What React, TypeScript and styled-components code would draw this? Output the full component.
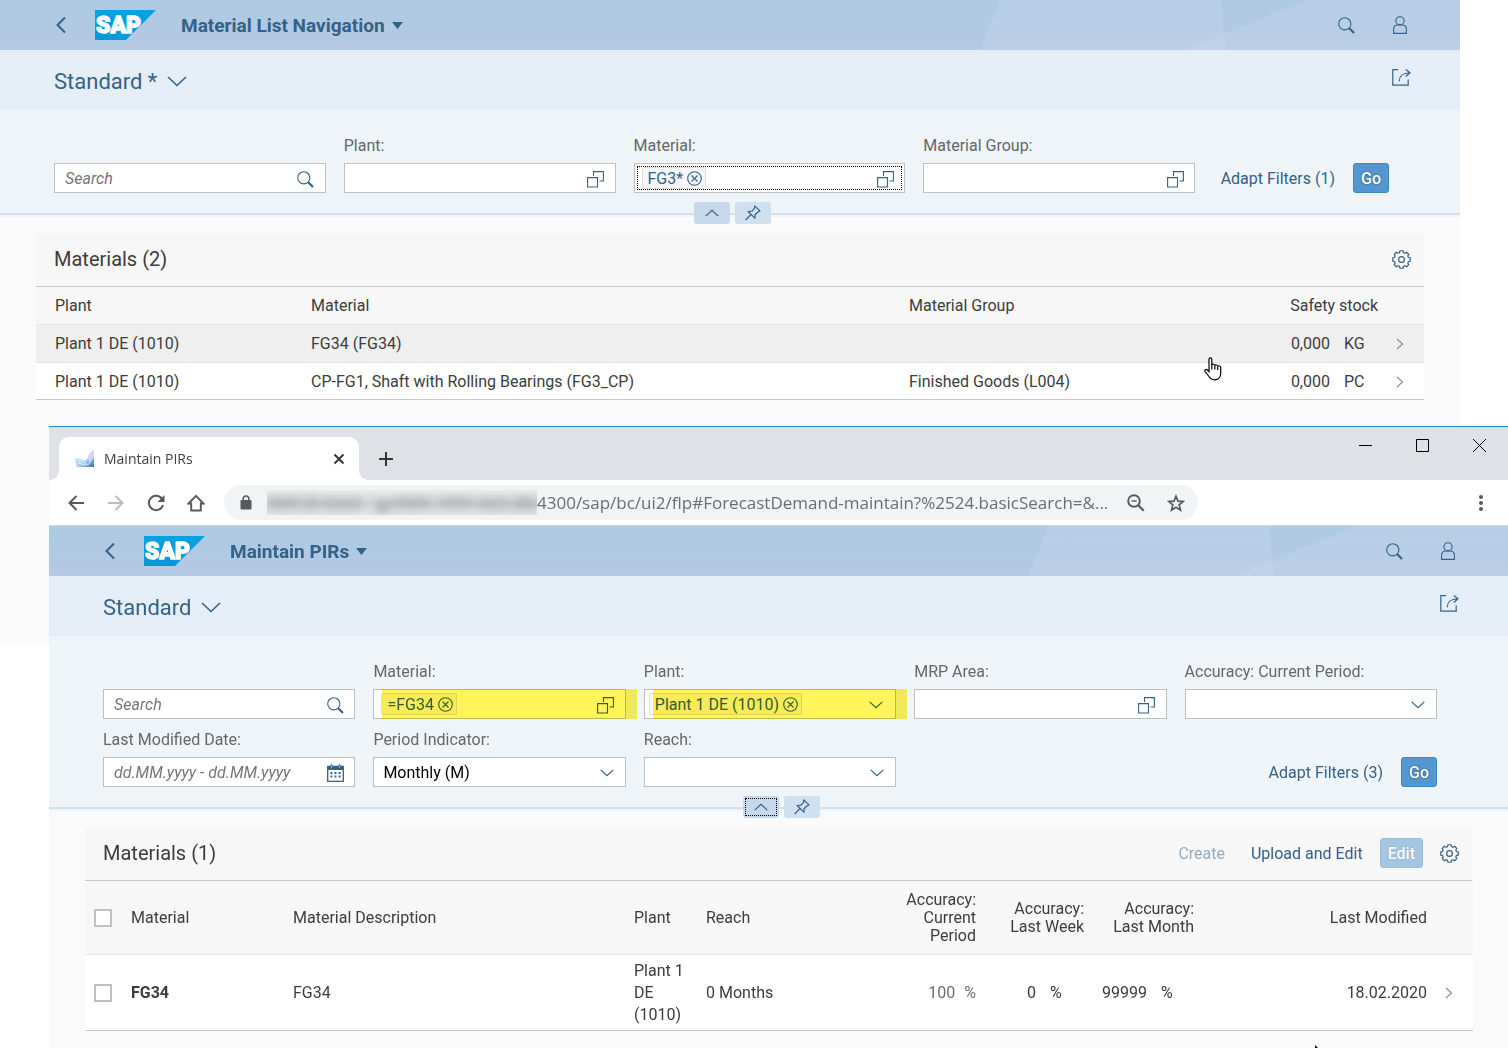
import React from "react";
import styled, { createGlobalStyle, css } from "styled-components";

const BLUE = "#346187";
const UI = `Roboto, "Noto Sans", sans-serif`;
const CHROME = `"Open Sans", "Noto Sans", sans-serif`;

const GlobalStyle = createGlobalStyle`
  *, *::before, *::after { box-sizing: border-box; }
  body { margin: 0; background: #fff; font-family: ${UI}; font-size: 16px; color: #3c3c3c; }
  button, input, select { font: inherit; color: inherit; margin: 0; }
  button { padding: 0; border: 0; background: none; cursor: pointer; }
  svg { display: block; flex: none; }
`;

/* ---------- windows ---------- */

const Desktop = styled.main`
  position: relative;
  display: grid;
  grid-template-columns: minmax(0, 1fr);
  grid-template-rows: 1fr;
  min-height: 100vh;
  overflow: hidden;
`;

const Window = styled.section`
  grid-area: 1 / 1;
  background: #fafafa;
`;

const BackWindow = styled(Window)`
  margin-right: 48px;
  height: 645px;
`;

const FrontWindow = styled(Window)`
  z-index: 1;
  margin: 426px 0 0 49px;
  border-top: 1px solid #1a85d6;
`;

const Pointer = styled.svg<{ $x: number; $y: number }>`
  position: absolute;
  z-index: 2;
  left: ${(p) => p.$x}px;
  top: ${(p) => p.$y}px;
  pointer-events: none;
`;

/* ---------- browser frame ---------- */

const TabStrip = styled.div`
  display: flex;
  align-items: flex-end;
  height: 53px;
  padding-left: 10px;
  background: #dee1e6;
  font-family: ${CHROME};
`;

const Tab = styled.div`
  position: relative;
  display: flex;
  align-items: center;
  gap: 10px;
  width: 300px;
  height: 43px;
  padding: 0 14px 0 16px;
  border-radius: 10px 10px 0 0;
  background: #fff;
  font-size: 14px;
  color: #3c4043;

  &::before,
  &::after {
    content: "";
    position: absolute;
    bottom: 0;
    width: 10px;
    height: 10px;
  }
  &::before {
    right: 100%;
    background: radial-gradient(circle at 0 0, transparent 10px, #fff 10px);
  }
  &::after {
    left: 100%;
    background: radial-gradient(circle at 100% 0, transparent 10px, #fff 10px);
  }
`;

const TabTitle = styled.span`
  flex: 1;
`;

const NewTab = styled.button`
  display: grid;
  place-items: center;
  width: 54px;
  height: 43px;
`;

const WindowControls = styled.div`
  display: flex;
  align-self: flex-start;
  margin-left: auto;
`;

const ControlButton = styled.button`
  display: grid;
  place-items: center;
  width: 57px;
  height: 37px;
`;

const BrowserBar = styled.div`
  display: flex;
  align-items: center;
  height: 46px;
  padding: 0 18px 0 7px;
  border-bottom: 1px solid #ccd4dc;
  background: #fff;
  font-family: ${CHROME};
`;

const BarButton = styled.button`
  display: grid;
  place-items: center;
  width: 40px;
  height: 36px;
`;

const AddressBar = styled.div`
  display: flex;
  align-items: center;
  flex: 1;
  min-width: 0;
  height: 35px;
  margin: 0 274px 0 8px;
  padding: 0 2px 0 16px;
  border-radius: 18px;
  background: #f1f3f4;
`;

const HiddenHost = styled.div`
  width: 270px;
  height: 25px;
  margin-left: 15px;
  overflow: hidden;
  background: linear-gradient(#ebeced, #d6d7d8 55%, #e4e5e6);
  > svg {
    filter: blur(5px);
  }
`;

const Address = styled.input`
  flex: 1;
  min-width: 0;
  height: 30px;
  padding: 0;
  border: 0;
  background: none;
  font-size: 17px;
  color: #6a6d71;
  text-overflow: ellipsis;
`;

/* ---------- Fiori shell ---------- */

const Shell = styled.header`
  position: relative;
  display: flex;
  align-items: center;
  height: 50px;
  padding: 0 53px 0 54px;
  background: linear-gradient(#aecae3, #b4c9e3);
  color: ${BLUE};
`;

const ShellPattern = styled.svg`
  position: absolute;
  top: 0;
  right: 0;
`;

const BackButton = styled.button`
  margin-right: 27px;
`;

const Title = styled.button`
  display: flex;
  align-items: center;
  gap: 7px;
  margin: 0 auto 0 25px;
  font-size: 19px;
  font-weight: 700;
`;

const ShellActions = styled.div`
  position: relative;
  display: flex;
  gap: 38px;
`;

const VariantBar = styled.div`
  display: flex;
  align-items: center;
  justify-content: space-between;
  height: 60px;
  padding: 2px 49px 0 54px;
  background: #e5edf6;
  color: ${BLUE};
`;

const Variant = styled.button`
  display: flex;
  align-items: center;
  gap: 10px;
  font-size: 22px;
`;

const ShareButton = styled.button`
  margin-bottom: 8px;
`;

/* ---------- filter bar ---------- */

const FilterBar = styled.form`
  display: flex;
  align-items: flex-end;
  padding: 26px 71px 20px 54px;
  background: #eff4f9;
`;

const FilterGrid = styled.div<{ $columns: number }>`
  flex: 1;
  display: grid;
  grid-template-columns: repeat(${(p) => p.$columns}, minmax(0, 1fr));
  gap: 11px 18px;
`;

const FieldBlock = styled.div`
  display: flex;
  flex-direction: column;
  justify-content: flex-end;
  gap: 7px;
`;

const Label = styled.label`
  line-height: 20px;
  color: #666;
`;

const Box = styled.div<{ $focused?: boolean }>`
  position: relative;
  display: flex;
  align-items: center;
  height: 30px;
  border: 1px solid #bfbfbf;
  background: #fff;
  ${(p) =>
    p.$focused &&
    css`
      outline: 1px dotted #000;
      outline-offset: -4px;
    `}
`;

const TextInput = styled.input`
  flex: 1;
  min-width: 0;
  height: 28px;
  padding: 0 0 0 10px;
  border: 0;
  outline: 0;
  background: none;
  &::placeholder {
    font-style: italic;
    color: #757575;
    opacity: 1;
  }
`;

const InputButton = styled.button`
  display: grid;
  place-items: center;
  width: 38px;
  height: 28px;
  padding-top: 2px;
  color: ${BLUE};
`;

const SelectBox = styled(Box)`
  display: grid;
  align-items: center;
  color: ${BLUE};
  > * {
    grid-area: 1 / 1;
  }
  > svg {
    justify-self: end;
    margin: 2px 11px 0 0;
    pointer-events: none;
  }
`;

const Select = styled.select`
  appearance: none;
  width: 100%;
  height: 28px;
  padding: 0 38px 0 9px;
  border: 0;
  background: none;
  color: #000;
`;

const Token = styled.span<{ $inset: number }>`
  display: flex;
  align-items: center;
  gap: 4px;
  height: 22px;
  margin-left: ${(p) => p.$inset}px;
  padding: 0 3px 0 5px;
  border: 1px solid #ddd;
  border-radius: 2px;
  background: #f7f7f7;
  white-space: nowrap;
  color: ${BLUE};
`;

const Marker = styled.span`
  position: absolute;
  inset: -1px -12px -1px 8px;
  background: #fff45a;
  mix-blend-mode: multiply;
  pointer-events: none;
`;

const Actions = styled.div<{ $wide?: boolean }>`
  display: flex;
  justify-content: flex-end;
  align-items: center;
  gap: 18px;
  ${(p) =>
    p.$wide
      ? css`
          min-width: 194px;
        `
      : css`
          grid-column: 5;
          align-self: end;
        `}
`;

const LinkButton = styled.button`
  white-space: nowrap;
  color: ${BLUE};
  &:disabled {
    opacity: 0.5;
  }
`;

const SolidButton = styled.button`
  height: 30px;
  padding: 0 7px;
  border: 1px solid #3f87c4;
  border-radius: 3px;
  background: #5496cd;
  font-weight: 500;
  text-shadow: 0 0 2px rgba(0, 0, 0, 0.5);
  color: #fff;
  &:disabled {
    opacity: 0.5;
  }
`;

const Divider = styled.div`
  display: flex;
  justify-content: center;
  align-items: flex-start;
  gap: 5px;
  height: 4px;
  padding-left: 5px;
  border-top: 2px solid #d1e0ee;
  background: #eff4f9;
`;

const DividerButton = styled.button<{ $active?: boolean; $focused?: boolean }>`
  display: grid;
  place-items: center;
  width: 36px;
  height: 22px;
  margin-top: -13px;
  border-radius: 3px;
  background: ${(p) => (p.$active ? "#c6d8ea" : "#d1e0ee")};
  color: ${BLUE};
  ${(p) =>
    p.$focused &&
    css`
      outline: 1px dotted #000;
      outline-offset: -3px;
    `}
`;

/* ---------- table ---------- */

const Panel = styled.div`
  padding: 16px 36px 0;
`;

const PanelHead = styled.div`
  display: flex;
  align-items: center;
  height: 54px;
  padding: 0 13px 1px 18px;
  border-bottom: 1px solid #c8c8c8;
  background: #f7f7f7;
`;

const PanelTitle = styled.h2`
  margin: 0 auto 0 0;
  font-size: 20px;
  font-weight: 400;
`;

const PanelTools = styled.div`
  display: flex;
  align-items: center;
  gap: 17px;
  color: ${BLUE};
  > ${LinkButton} + ${LinkButton} {
    margin-left: 9px;
  }
`;

const Table = styled.table`
  width: 100%;
  table-layout: fixed;
  border-collapse: separate;
  border-spacing: 0;
  border-bottom: 1px solid #c8c8c8;
`;

const cell = css<{ $right?: boolean }>`
  padding: 0 9px;
  text-align: ${(p) => (p.$right ? "right" : "left")};
`;

const Th = styled.th<{ $right?: boolean }>`
  ${cell}
  padding-top: 10px;
  padding-bottom: 9px;
  border-bottom: 1px solid #e5e5e5;
  background: #f7f7f7;
  font-weight: 400;
  line-height: 18px;
`;

const Td = styled.td<{ $right?: boolean }>`
  ${cell}
  height: 36px;
  padding-top: 5px;
  padding-bottom: 4px;
  line-height: 22px;
`;

const Row = styled.tr<{ $hover?: boolean }>`
  background: ${(p) => (p.$hover ? "#efefef" : "#fff")};
  &:not(:last-child) ${Td} {
    height: 38px;
    border-bottom: 1px solid #e5e5e5;
  }
`;

const WideStartTable = styled(Table)`
  th:first-child,
  td:first-child {
    padding-left: 19px;
  }
`;

const Amount = styled.span<{ $muted?: boolean }>`
  display: flex;
  justify-content: flex-end;
  gap: ${(p) => (p.$muted ? 9 : 14)}px;
  color: ${(p) => (p.$muted ? "#6a6d70" : "inherit")};
`;

const Unit = styled.span<{ $natural?: boolean }>`
  width: ${(p) => (p.$natural ? "auto" : "34px")};
  text-align: left;
`;

const Check = styled.input`
  display: block;
  appearance: none;
  width: 18px;
  height: 18px;
  margin: 0;
  border: 2px solid #bfbfbf;
  background: #fff;
`;

const RowButton = styled.button`
  display: block;
  color: #8c8c8c;
`;

/* ---------- icons ---------- */

const line = { fill: "none", stroke: "currentColor" } as const;

const SearchIcon = () => (
  <svg width="17" height="17" viewBox="0 0 17 17" {...line}>
    <circle cx="6.8" cy="6.8" r="6.1" strokeWidth="1.1" />
    <path d="M11 11l5 5" strokeWidth="2.1" />
  </svg>
);

const UserIcon = () => (
  <svg width="14" height="18" viewBox="0 0 14 18" {...line} strokeWidth="1.1">
    <circle cx="7" cy="4.8" r="4.1" />
    <path d="M.6 17.4v-4c0-3 1.8-4.4 4-4.4h4.800c2.200 0 4 1.400 4 4.400v4z" />
  </svg>
);

const ShareIcon = () => (
  <svg width="19" height="17" viewBox="0 0 19 17" {...line} strokeWidth="1.2">
    <path d="M6 .7H.8v15.500h15.400v-5.700" />
    <path d="M7.300 12.200c0-5.300 2.500-8.200 10.700-8.400M13.800.6L18 3.800l-4.200 3.700" />
  </svg>
);

const BackIcon = () => (
  <svg width="14" height="18" viewBox="0 0 14 18" {...line} strokeWidth="2">
    <path d="M11 1.500L3.500 9l7.500 7.500" />
  </svg>
);

const ChevronIcon = ({ size, up }: { size: number; up?: boolean }) => (
  <svg width={size} height={size / 2 + 1} viewBox="0 0 20 11" {...line} strokeWidth={size > 16 ? 1.6 : 1.7}>
    <path d={up ? "M1 10l9-8.500 9 8.500" : "M1 1l9 8.500 9-8.500"} />
  </svg>
);

const CaretIcon = () => (
  <svg width="11" height="7" viewBox="0 0 11 7" fill="currentColor">
    <path d="M0 0h11L5.500 7z" />
  </svg>
);

const RowArrow = () => (
  <svg width="8" height="12" viewBox="0 0 8 12" {...line} strokeWidth="1.1">
    <path d="M1 1l5.500 5L1 11" />
  </svg>
);

const ValueHelpIcon = () => (
  <svg width="17" height="17" viewBox="0 0 17 17" {...line} strokeWidth="1.1">
    <path d="M.6 6.600h9.900v9.400H.6zM6.500 5V.6h9.900v9.400h-3.900" />
  </svg>
);

const PinIcon = () => (
  <svg width="16" height="16" viewBox="0 0 16 16" {...line} strokeWidth="1.2" strokeLinejoin="round">
    <path d="M9.600.9l5.400 5-1.700.8-3.100 2.800-.3 3.600-6.800-6.600 3.900-.4 2.700-3zM5.600 9.800L.6 15" />
  </svg>
);

const ClearIcon = () => (
  <svg width="15" height="15" viewBox="0 0 15 15" {...line} strokeWidth="1.1">
    <circle cx="7.500" cy="7.500" r="6.800" />
    <path d="M4.500 4.500l6 6M10.500 4.500l-6 6" />
  </svg>
);

const CalendarIcon = () => (
  <svg width="17" height="18" viewBox="0 0 17 18" fill="currentColor">
    <path d="M.7 2.500h15.600v14.800H.7z" fill="none" stroke="currentColor" strokeWidth="1.300" />
    <path d="M.7 2.500h15.600v3.500H.7z" />
    <path d="M3.500.5h2v3h-2zM11.500.5h2v3h-2z" />
    {[8, 11.5].map((y) => [3.4, 7.5, 11.6].map((x) => <path key={`${x}-${y}`} d={`M${x} ${y}h2v2h-2z`} />))}
    <path d="M4.100 2h.8v1.500h-.8zM12.100 2h.8v1.500h-.8z" fill="#fff" />
  </svg>
);

const gearOutline = Array.from({ length: 8 }, (_, i) =>
  [
    [-16, 7.2],
    [-10, 8.9],
    [10, 8.9],
    [16, 7.2],
  ].map(([deg, r]) => {
    const a = ((i * 45 + deg - 90) * Math.PI) / 180;
    return `${(9.5 + r * Math.cos(a)).toFixed(2)},${(9.5 + r * Math.sin(a)).toFixed(2)}`;
  })
)
  .flat()
  .join(" ");

const GearIcon = () => (
  <svg width="19" height="19" viewBox="0 0 19 19" {...line} strokeWidth="1.2" strokeLinejoin="round">
    <polygon points={gearOutline} />
    <circle cx="9.500" cy="9.500" r="2.900" />
  </svg>
);

const SapLogo = () => (
  <svg width="61" height="30" viewBox="0 0 61 30" role="img" aria-label="SAP">
    <defs>
      <linearGradient id="sap-blue" x1="0" y1="0" x2="0" y2="1">
        <stop offset="0" stopColor="#06a2e2" />
        <stop offset="1" stopColor="#0797db" />
      </linearGradient>
    </defs>
    <path d="M0 0h61L31 30H0z" fill="url(#sap-blue)" />
    <text
      x="1"
      y="23"
      fontFamily="Roboto, sans-serif"
      fontWeight="900"
      fontSize="23"
      fill="#fff"
      stroke="#fff"
      strokeWidth="1.4"
      strokeLinejoin="round"
    >
      SAP
    </text>
  </svg>
);

/* ---------- composed parts ---------- */

const AppShell = ({ title }: { title: string }) => (
  <Shell>
    <ShellPattern width="480" height="50" viewBox="0 0 480 50" aria-hidden="true">
      <path d="M20 0h221l5 50H0z" fill="#cfe0f0" opacity=".25" />
      <path d="M328 0h152v50H205z" fill="#cfe0f0" opacity=".25" />
    </ShellPattern>
    <BackButton aria-label="Back">
      <BackIcon />
    </BackButton>
    <SapLogo />
    <Title>
      {title}
      <CaretIcon />
    </Title>
    <ShellActions>
      <button aria-label="Search">
        <SearchIcon />
      </button>
      <button aria-label="User">
        <UserIcon />
      </button>
    </ShellActions>
  </Shell>
);

const VariantHeader = ({ name }: { name: string }) => (
  <VariantBar>
    <Variant>
      {name}
      <ChevronIcon size={20} />
    </Variant>
    <ShareButton aria-label="Share">
      <ShareIcon />
    </ShareButton>
  </VariantBar>
);

type FieldProps = {
  id: string;
  label?: string;
  placeholder?: string;
  token?: string;
  inset?: number;
  focused?: boolean;
  marked?: boolean;
  icon: React.ReactNode;
  action: string;
};

const Field = ({ id, label, placeholder, token, inset = 7, focused, marked, icon, action }: FieldProps) => (
  <FieldBlock>
    {label && <Label htmlFor={id}>{label}</Label>}
    <Box $focused={focused}>
      {token && (
        <Token $inset={inset}>
          {token}
          <button type="button" aria-label={`Remove ${token}`}>
            <ClearIcon />
          </button>
        </Token>
      )}
      <TextInput id={id} placeholder={placeholder} aria-label={label ? undefined : placeholder} />
      <InputButton type="button" aria-label={action}>
        {icon}
      </InputButton>
      {marked && <Marker />}
    </Box>
  </FieldBlock>
);

const SelectField = ({ id, label, value = "" }: { id: string; label: string; value?: string }) => (
  <FieldBlock>
    <Label htmlFor={id}>{label}</Label>
    <SelectBox>
      <Select id={id} defaultValue={value}>
        <option>{value}</option>
      </Select>
      <ChevronIcon size={14} />
    </SelectBox>
  </FieldBlock>
);

const HeaderToggle = ({ focused }: { focused?: boolean }) => (
  <Divider>
    <DividerButton $active $focused={focused} aria-label="Collapse header">
      <ChevronIcon size={14} up />
    </DividerButton>
    <DividerButton aria-label="Pin header">
      <PinIcon />
    </DividerButton>
  </Divider>
);

const Columns = ({ widths }: { widths: number[] }) => (
  <colgroup>
    {widths.map((w, i) => (
      <col key={i} width={w} />
    ))}
  </colgroup>
);

const materials = [
  { plant: "Plant 1 DE (1010)", material: "FG34 (FG34)", group: "", unit: "KG", hover: true },
  {
    plant: "Plant 1 DE (1010)",
    material: "CP-FG1, Shaft with Rolling Bearings (FG3_CP)",
    group: "Finished Goods (L004)",
    unit: "PC",
    hover: false,
  },
];

const MaterialList = () => (
  <BackWindow>
    <AppShell title="Material List Navigation" />
    <VariantHeader name="Standard *" />
    <FilterBar onSubmit={(e) => e.preventDefault()}>
      <FilterGrid $columns={4}>
        <Field id="list-search" placeholder="Search" icon={<SearchIcon />} action="Search" />
        <Field id="list-plant" label="Plant:" icon={<ValueHelpIcon />} action="Choose plant" />
        <Field id="list-material" label="Material:" token="FG3*" focused icon={<ValueHelpIcon />} action="Choose material" />
        <Field id="list-group" label="Material Group:" icon={<ValueHelpIcon />} action="Choose material group" />
      </FilterGrid>
      <Actions $wide>
        <LinkButton type="button">Adapt Filters (1)</LinkButton>
        <SolidButton>Go</SolidButton>
      </Actions>
    </FilterBar>
    <HeaderToggle />
    <Panel>
      <PanelHead>
        <PanelTitle>Materials (2)</PanelTitle>
        <PanelTools>
          <button aria-label="Settings">
            <GearIcon />
          </button>
        </PanelTools>
      </PanelHead>
      <WideStartTable>
        <Columns widths={[266, 598, 300, 187, 37]} />
        <thead>
          <tr>
            <Th scope="col">Plant</Th>
            <Th scope="col">Material</Th>
            <Th scope="col">Material Group</Th>
            <Th scope="col" $right>
              Safety stock
            </Th>
            <Th />
          </tr>
        </thead>
        <tbody>
          {materials.map((m) => (
            <Row key={m.material} $hover={m.hover}>
              <Td>{m.plant}</Td>
              <Td>{m.material}</Td>
              <Td>{m.group}</Td>
              <Td $right>
                <Amount>
                  0,000<Unit>{m.unit}</Unit>
                </Amount>
              </Td>
              <Td>
                <RowButton aria-label="Open">
                  <RowArrow />
                </RowButton>
              </Td>
            </Row>
          ))}
        </tbody>
      </WideStartTable>
    </Panel>
  </BackWindow>
);

const BrowserFrame = () => (
  <>
    <TabStrip>
      <Tab>
        <svg width="19" height="19" viewBox="0 0 19 19">
          <defs>
            <linearGradient id="tab-wave" x1="0" y1="0" x2="1" y2="1">
              <stop offset="0" stopColor="#e3f0fa" />
              <stop offset=".6" stopColor="#9ccbee" />
              <stop offset="1" stopColor="#2f6fb4" />
            </linearGradient>
          </defs>
          <path d="M0 10c4-1 7 0 10 2 3-2 5-7 9-9v15H2z" fill="url(#tab-wave)" />
          <path d="M13 8c1-4 3-6 6-7v8l-5 4z" fill="#d8d3ee" />
          <path d="M3 12c4-1 6 1 8 3s4-1 5-4M3 14c3 0 5 2 8 2" fill="none" stroke="#fff" strokeWidth=".8" />
        </svg>
        <TabTitle>Maintain PIRs</TabTitle>
        <button aria-label="Close tab">
          <svg width="12" height="12" viewBox="0 0 12 12" fill="none" stroke="#333" strokeWidth="1.900">
            <path d="M1.500 1.500l9 9M10.500 1.500l-9 9" />
          </svg>
        </button>
      </Tab>
      <NewTab aria-label="New tab">
        <svg width="14" height="14" viewBox="0 0 14 14" fill="none" stroke="#333" strokeWidth="2">
          <path d="M7 0v14M0 7h14" />
        </svg>
      </NewTab>
      <WindowControls>
        <ControlButton aria-label="Minimize">
          <svg width="13" height="13" stroke="#000">
            <path d="M0 6.500h13" />
          </svg>
        </ControlButton>
        <ControlButton aria-label="Maximize">
          <svg width="13" height="13" fill="none" stroke="#000">
            <path d="M.5.5h12v12H.5z" />
          </svg>
        </ControlButton>
        <ControlButton aria-label="Close">
          <svg width="13" height="13" stroke="#000">
            <path d="M0 0l13 13M13 0L0 13" />
          </svg>
        </ControlButton>
      </WindowControls>
    </TabStrip>
    <BrowserBar>
      <BarButton aria-label="Back">
        <svg width="16" height="16" fill="none" stroke="#55585c" strokeWidth="2">
          <path d="M16 8H1.500M8.500 1L1.500 8l7 7" />
        </svg>
      </BarButton>
      <BarButton aria-label="Forward">
        <svg width="16" height="16" fill="none" stroke="#bcbec1" strokeWidth="2">
          <path d="M0 8h14.500M7.500 1l7 7-7 7" />
        </svg>
      </BarButton>
      <BarButton aria-label="Reload">
        <svg width="18" height="18" fill="none" stroke="#55585c" strokeWidth="2">
          <path d="M15.200 5.200A7.200 7.200 0 1 0 16 11" />
          <path d="M17.500 1v7h-7z" fill="#55585c" stroke="none" />
        </svg>
      </BarButton>
      <BarButton aria-label="Home">
        <svg width="18" height="18" fill="none" stroke="#55585c" strokeWidth="1.900">
          <path d="M1.500 9.500L9 1.800l7.500 7.700h-2.700v7H4.200v-7z" />
        </svg>
      </BarButton>
      <AddressBar>
        <svg width="12" height="15" viewBox="0 0 12 15" fill="#55585c">
          <rect x=".5" y="5" width="11" height="9.500" rx="1" />
          <path d="M3.200 5.500V3.800a2.800 2.800 0 0 1 5.600 0v1.700" fill="none" stroke="#55585c" strokeWidth="1.500" />
        </svg>
        <HiddenHost>
          <svg width="270" height="25" fill="#8c8f93" opacity=".5">
            <path d="M0 8h34v10H0zM38 7h12v12H38zM54 9h42v9H54zM106 10h22l-8 14h-8zM128 8h36v10h-36zM170 8h36v9h-36zM210 9h32v9h-32zM246 8h24v11h-24z" />
          </svg>
        </HiddenHost>
        <Address
          aria-label="Address"
          readOnly
          value="4300/sap/bc/ui2/flp#ForecastDemand-maintain?%2524.basicSearch=&amp;..."
        />
        <BarButton aria-label="Zoom">
          <svg width="18" height="18" fill="none" stroke="#55585c" strokeWidth="1.900">
            <circle cx="7" cy="7" r="5.800" />
            <path d="M11.200 11.200l5.500 5.500" strokeWidth="2.200" />
            <path d="M4.500 7h5" strokeWidth="1.400" />
          </svg>
        </BarButton>
        <BarButton aria-label="Bookmark">
          <svg width="18" height="18" viewBox="0 0 18 18" fill="none" stroke="#55585c" strokeWidth="1.700">
            <path d="M9 2.200l2 4.900 5.200.4-4 3.400 1.300 5.200L9 13.300l-4.500 2.800 1.300-5.200-4-3.400L7 7.100z" />
          </svg>
        </BarButton>
      </AddressBar>
      <button aria-label="Menu">
        <svg width="18" height="18" fill="#55585c">
          <circle cx="9" cy="3" r="2" />
          <circle cx="9" cy="9" r="2" />
          <circle cx="9" cy="15" r="2" />
        </svg>
      </button>
    </BrowserBar>
  </>
);

const MaintainPirs = () => (
  <FrontWindow>
    <BrowserFrame />
    <AppShell title="Maintain PIRs" />
    <VariantHeader name="Standard" />
    <FilterBar onSubmit={(e) => e.preventDefault()}>
      <FilterGrid $columns={5}>
        <Field id="pir-search" placeholder="Search" icon={<SearchIcon />} action="Search" />
        <Field id="pir-material" label="Material:" token="=FG34" marked icon={<ValueHelpIcon />} action="Choose material" />
        <Field
          id="pir-plant"
          label="Plant:"
          token="Plant 1 DE (1010)"
          inset={4}
          marked
          icon={<ChevronIcon size={14} />}
          action="Choose plant"
        />
        <Field id="pir-area" label="MRP Area:" icon={<ValueHelpIcon />} action="Choose MRP area" />
        <SelectField id="pir-accuracy" label="Accuracy: Current Period:" />
        <Field
          id="pir-date"
          label="Last Modified Date:"
          placeholder="dd.MM.yyyy - dd.MM.yyyy"
          icon={<CalendarIcon />}
          action="Open calendar"
        />
        <SelectField id="pir-period" label="Period Indicator:" value="Monthly (M)" />
        <SelectField id="pir-reach" label="Reach:" />
        <Actions>
          <LinkButton type="button">Adapt Filters (3)</LinkButton>
          <SolidButton>Go</SolidButton>
        </Actions>
      </FilterGrid>
    </FilterBar>
    <HeaderToggle focused />
    <Panel>
      <PanelHead>
        <PanelTitle>Materials (1)</PanelTitle>
        <PanelTools>
          <LinkButton disabled>Create</LinkButton>
          <LinkButton>Upload and Edit</LinkButton>
          <SolidButton disabled>Edit</SolidButton>
          <button aria-label="Settings">
            <GearIcon />
          </button>
        </PanelTools>
      </PanelHead>
      <Table>
        <Columns widths={[37, 162, 341, 72, 193, 95, 108, 110, 233, 37]} />
        <thead>
          <tr>
            <Th>
              <Check type="checkbox" aria-label="Select all" />
            </Th>
            <Th scope="col">Material</Th>
            <Th scope="col">Material Description</Th>
            <Th scope="col">Plant</Th>
            <Th scope="col">Reach</Th>
            <Th scope="col" $right>
              Accuracy: Current Period
            </Th>
            <Th scope="col" $right>
              Accuracy: Last Week
            </Th>
            <Th scope="col" $right>
              Accuracy: Last Month
            </Th>
            <Th scope="col" $right>
              Last Modified
            </Th>
            <Th />
          </tr>
        </thead>
        <tbody>
          <Row>
            <Td>
              <Check type="checkbox" aria-label="Select FG34" />
            </Td>
            <Td>
              <b>FG34</b>
            </Td>
            <Td>FG34</Td>
            <Td>Plant 1 DE (1010)</Td>
            <Td>0 Months</Td>
            <Td>
              <Amount $muted>
                100<Unit $natural>%</Unit>
              </Amount>
            </Td>
            <Td>
              <Amount>
                0<Unit>%</Unit>
              </Amount>
            </Td>
            <Td>
              <Amount>
                99999<Unit>%</Unit>
              </Amount>
            </Td>
            <Td $right>18.02.2020</Td>
            <Td>
              <RowButton aria-label="Open">
                <RowArrow />
              </RowButton>
            </Td>
          </Row>
        </tbody>
      </Table>
    </Panel>
  </FrontWindow>
);

export default function App() {
  return (
    <>
      <GlobalStyle />
      <Desktop>
        <MaterialList />
        <MaintainPirs />
        <Pointer $x={1204} $y={357} width="19" height="24" viewBox="0 0 19 24" fill="#fff" stroke="#000" strokeWidth="1.200">
          <path d="M5 14.500V2.200C5 .4 7.800.4 7.800 2.200v6c.3-1.500 3-1.300 3 .6.300-1.300 2.900-1.100 2.900.8.400-1.100 3-.8 3 1v5.200c0 4.600-2.200 7-6 7-3.500 0-4.900-1.500-6.500-4.300L1 14.500c-.9-1.600 1.200-2.800 2.400-1.500zM7.800 8v4.500M10.800 9v3.500M13.700 10v3" />
        </Pointer>
        <Pointer $x={1315} $y={1045} width="12" height="19" viewBox="0 0 12 19">
          <path d="M0 0v16l4-4 3 7 2-1-3-6h6z" />
        </Pointer>
      </Desktop>
    </>
  );
}
